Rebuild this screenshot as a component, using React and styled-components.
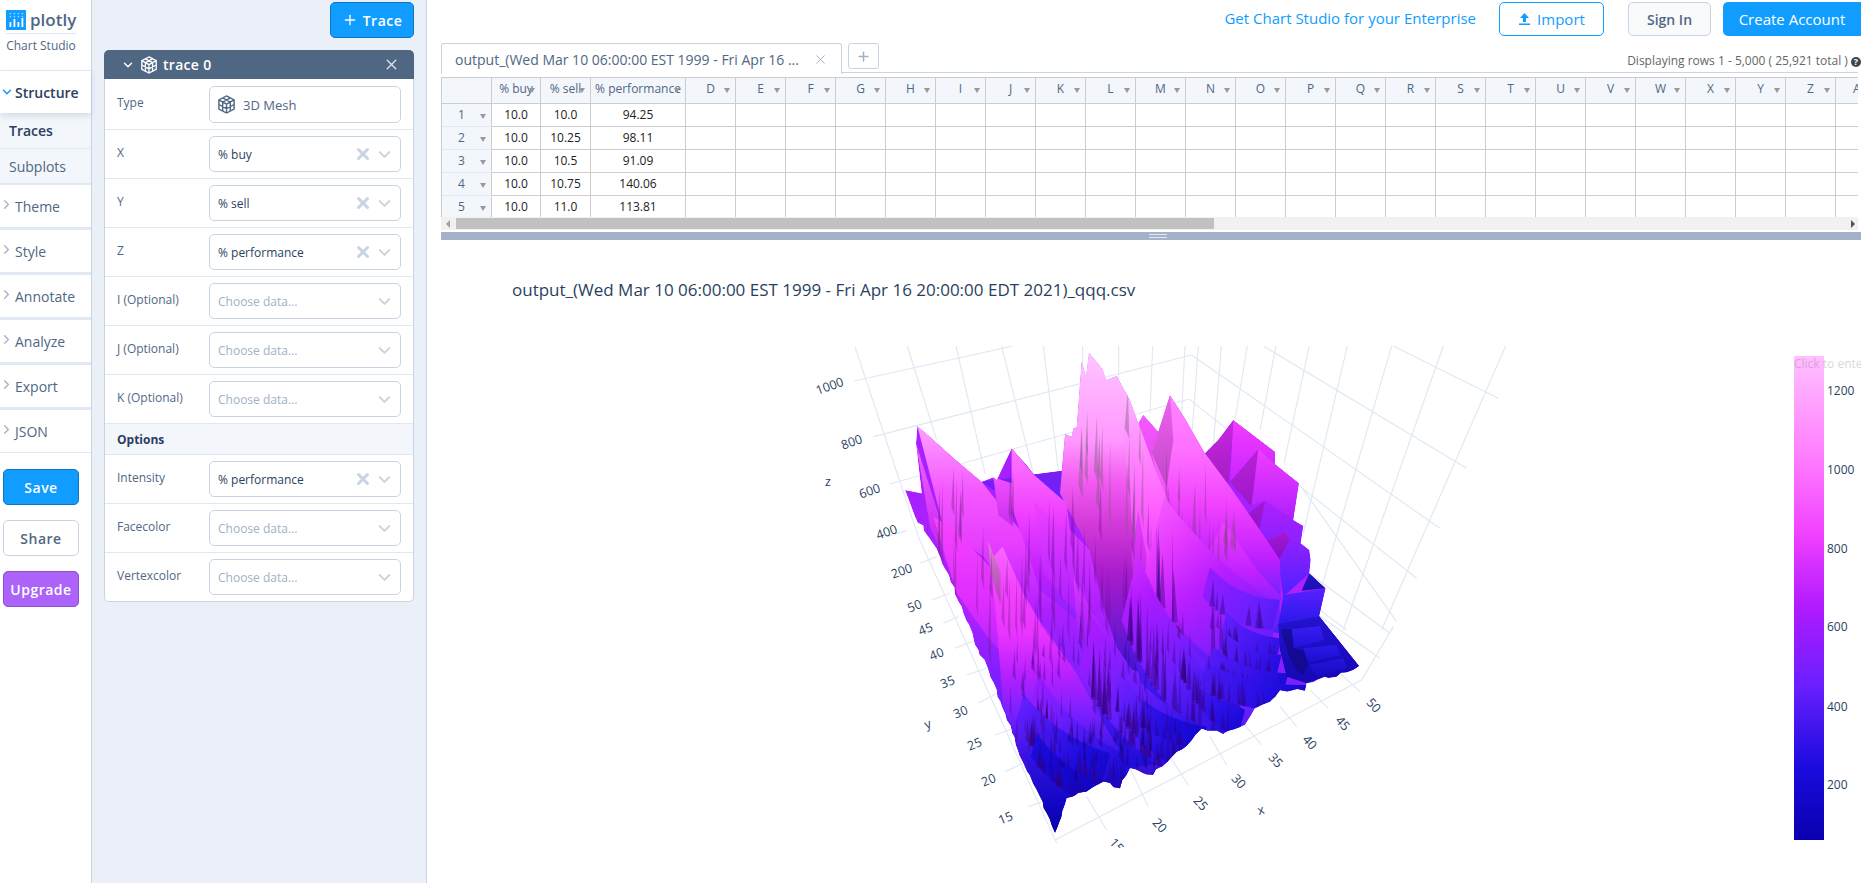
import React, { useMemo } from 'react';
import styled, { createGlobalStyle } from 'styled-components';
import { ChevronDown, ChevronRight, Plus, X } from 'lucide-react';

const SECTIONS = ['Theme', 'Style', 'Annotate', 'Analyze', 'Export', 'JSON'];
const LETTERS = 'DEFGHIJKLMNOPQRSTUVWXYZ'.split('').concat('AA');
const ROWS = [
  ['10.0', '10.0', '94.25'],
  ['10.0', '10.25', '98.11'],
  ['10.0', '10.5', '91.09'],
  ['10.0', '10.75', '140.06'],
  ['10.0', '11.0', '113.81'],
];

// colour scale of the trace, taken from the colour bar
const SCALE = [
  [0, [10, 0, 176]], [0.15, [26, 11, 221]], [0.32, [106, 31, 255]], [0.48, [176, 26, 255]],
  [0.63, [240, 64, 255]], [0.8, [255, 128, 255]], [1, [255, 192, 255]],
];

function ramp(t) {
  const v = Math.max(0, Math.min(1, t));
  let i = 0;
  while (i < SCALE.length - 2 && v > SCALE[i + 1][0]) i++;
  const [a, ca] = SCALE[i];
  const [b, cb] = SCALE[i + 1];
  const f = (v - a) / (b - a);
  return `rgb(${ca.map((n, j) => Math.round(n + (cb[j] - n) * f)).join(',')})`;
}

function makeRandom(start) {
  let seed = start;
  return () => {
    seed = (Math.imul(seed, 1664525) + 1013904223) >>> 0;
    return seed / 4294967296;
  };
}

const OUTLINE_TOP = '45,450 95,460 78,310 82,258 120,290 195,358 275,425 310,412 320,420 365,325 410,375 432,403 515,392 525,282 545,290 550,265 560,262 575,62 588,110 597,38 638,88 648,120 680,108 720,180 745,250 760,225 805,275 840,165 885,235 945,340 985,300 1030,240 1155,335 1155,372 1227,430 1210,540 1240,558 1232,610 1258,630 1262,660 1258,700 1307,745 1288,828 1408,978';
const OUTLINE_LOW = [[1408, 978], [1390, 990], [1340, 1010], [1285, 1018], [1250, 1030], [1245, 1052], [1170, 1050], [1140, 1085], [1095, 1105], [1065, 1155], [1000, 1182], [935, 1165], [905, 1200], [860, 1235], [830, 1268], [790, 1305], [720, 1285], [690, 1345], [640, 1325], [590, 1355], [530, 1375], [515, 1430], [495, 1480], [470, 1420], [440, 1350], [400, 1270], [350, 1140], [320, 1050], [265, 930], [215, 800], [150, 650], [115, 590], [75, 530]];

// the lower edges are stepped in the plot, so break them into short teeth
function jagged() {
  const rnd = makeRandom(91);
  const pts = [];
  OUTLINE_LOW.forEach(([x, y], i) => {
    if (i === 0) return;
    const [px, py] = OUTLINE_LOW[i - 1];
    const steps = Math.max(1, Math.round(Math.hypot(x - px, y - py) / 20));
    for (let s = 1; s <= steps; s++) {
      const f = s / steps;
      const jx = s === steps ? 0 : (rnd() - 0.5) * 10;
      const jy = s === steps ? 0 : (rnd() - 0.5) * 10;
      pts.push(`${px + (x - px) * f + jx},${py + (y - py) * f + jy}`);
    }
  });
  return `${OUTLINE_TOP} ${pts.join(' ')}`;
}

const SILHOUETTE = jagged();

// facets of the surface, back to front, in a 3x space with origin at (890,340)
const FACETS = [
  { p: SILHOUETTE, s: [[450, '#a820ff'], [800, '#b020ff'], [1100, '#6a1fff'], [1480, '#0a00a8']] },
  { p: '275,425 515,392 530,500 430,470 310,450', s: [[392, '#7a1ff0'], [480, '#6a1fff']] },
  { p: '945,340 1030,240 1015,430 1000,420', s: [[240, '#c828e0'], [430, '#a51cc4']] },
  { p: '1030,240 1155,335 1155,372 1105,330 1020,430', s: [[240, '#f43cff'], [430, '#c824ff']] },
  { p: '1105,328 1020,425 1080,495 1125,480 1210,540', s: [[328, '#b822d8'], [495, '#9c18c8']] },
  { p: '1105,328 1155,372 1227,430 1210,540 1125,482 1085,495', s: [[328, '#f23cff'], [540, '#ae20ff']] },
  { p: '1125,482 1075,520 1105,590 1120,610 1185,570 1210,540', s: [[482, '#a018d8'], [610, '#8a14c8']] },
  { p: '1125,482 1210,540 1240,558 1232,610 1185,572 1120,612 1105,590', s: [[482, '#b020ff'], [610, '#8a20ff']] },
  { p: '1185,572 1120,612 1165,665 1200,600', s: [[572, '#a818d8'], [665, '#8010c4']] },
  { p: '1185,572 1232,610 1258,630 1262,660 1258,700 1180,770 1165,665 1200,600', s: [[572, '#9a20ff'], [770, '#4e20ff']] },
  { p: '1258,700 1307,745 1235,752', s: [[700, '#2414c8'], [752, '#1c10b0']] },
  { p: '745,250 760,225 805,275 860,400 900,600 760,600 720,400', s: [[225, '#f858ff'], [600, '#d030e0']] },
  { p: '840,165 885,235 945,340 1020,440 1110,570 1170,660 1172,780 1030,810 900,650 820,480 785,340', s: [[165, '#ff84ff'], [330, '#ff70ff'], [500, '#f040ff'], [650, '#c020ff'], [810, '#5a20ff']] },
  { p: '840,165 812,250 785,340 830,440 850,300', s: [[165, '#f060f0'], [440, '#c048c8']] },
  { p: '1000,545 1040,600 1100,690 1170,765 1170,880 1040,860 960,810 955,640', s: [[545, '#f040ff'], [700, '#c020ff'], [880, '#4a20ff']] },
  { p: '510,460 525,282 545,290 550,265 560,262 575,62 597,38 638,88 680,108 720,180 745,250 800,400 860,540 940,700 960,780 880,900 760,1000 700,980 640,800 600,630 530,500', s: [[40, '#ffc4ff'], [300, '#ff98ff'], [430, '#f258f2'], [550, '#d43ad8'], [700, '#a81ccc'], [850, '#7a18d0'], [1000, '#3a14d8']] },
  { p: '720,180 745,250 800,400 860,540 940,700 960,790 880,920 770,960 730,640 720,440 700,300', s: [[180, '#ffb0ff'], [500, '#ff60ff'], [700, '#e838ff'], [850, '#a020ff'], [960, '#6020ff']] },
  { p: '745,510 725,640 735,860 760,800 770,650', s: [[510, '#f040ff'], [860, '#a01cd8']] },
  { p: '82,258 120,290 195,358 275,425 390,570 440,660 530,800 400,810 280,650 160,560', s: [[258, '#ffa0ff'], [450, '#f458ff'], [620, '#e63cff'], [810, '#b020ff']] },
  { p: '78,310 160,570 300,830 250,850 120,560', s: [[310, '#f468ff'], [560, '#d030f4'], [850, '#b020ff']] },
  { p: '310,412 325,525 370,560 365,430', s: [[412, '#f050ff'], [560, '#c82cf0']] },
  { p: '365,325 430,403 530,490 540,570 600,630 615,830 560,840 450,750 400,600 365,500', s: [[325, '#ff78ff'], [520, '#f040ff'], [700, '#c020ff'], [840, '#8a20ff']] },
  { p: '432,485 520,570 600,640 640,810 560,820 460,700', s: [[485, '#f040ff'], [820, '#a81eff']] },
  { p: '130,530 190,565 300,680 400,800 470,870 560,1000 400,1010 300,900 200,760', s: [[530, '#f844ff'], [800, '#dc2cff'], [1010, '#9c20ff']] },
  { p: '550,710 615,830 700,950 790,1090 830,1268 720,1285 640,1150 590,1000 560,850', s: [[710, '#e038ff'], [880, '#a420ff'], [1050, '#5a1cff'], [1270, '#1e0cd8']] },
  { p: '760,700 900,850 1000,1000 1050,1100 1000,1182 860,1235 830,1268 770,1100 720,900', s: [[700, '#d828ff'], [850, '#9420ff'], [1000, '#4a18f0'], [1220, '#1a0cd8']] },
  { p: '295,605 310,650 338,620 400,760 470,880 560,1000 640,1150 720,1285 690,1345 640,1325 590,1355 530,1375 515,1430 495,1480 440,1350 340,1100 320,850', s: [[620, '#f868ff'], [750, '#f440ff'], [880, '#ea34ff'], [1000, '#b820ff'], [1120, '#7a20ff'], [1250, '#3412e4'], [1400, '#1006c0'], [1480, '#0a00a8']] },
  { p: '295,605 302,700 332,795 332,700', s: [[605, '#d880d0'], [795, '#b040b8']] },
];

// these sit in front of the swept ridges
const FRONT_FACETS = [
  { p: '1180,765 1307,745 1288,828 1165,855', s: [[745, '#5a20ff'], [855, '#2818e8']] },
  { p: '1165,852 1288,828 1408,978 1390,990 1340,1010 1285,1018 1250,1030 1190,1010 1170,930', s: [[828, '#2412d0'], [1030, '#1408b4']] },
  { p: '1205,868 1290,858 1302,900 1210,925', s: [[858, '#3a1cf4'], [925, '#2012d8']] },
  { p: '1240,925 1340,915 1352,945 1255,968', s: [[915, '#2c18e8'], [968, '#1a0ecc']] },
  { p: '1258,975 1360,955 1372,985 1280,1010', s: [[955, '#2414dc'], [1010, '#160cc0']] },
  { p: '1172,868 1205,868 1212,925 1240,930 1255,968 1240,1005 1218,990 1195,945', s: [[870, '#180c9c'], [1005, '#120890']] },
];

// swept ridges of the lower half: [ax, ay, bx, by, sag, depth, t at a, t at b, needles]
const RIBBONS = [
  [822, 470, 1170, 800, 22, 260, 0.7, 0.3, 8],
  [745, 640, 1000, 1010, 35, 200, 0.56, 0.22, 20],
  [960, 680, 1170, 780, 25, 90, 0.42, 0.28, 6],
  [610, 830, 940, 1160, 40, 170, 0.48, 0.15, 24],
  [445, 1000, 720, 1250, 30, 110, 0.44, 0.12, 22],
  [690, 985, 900, 1190, 25, 100, 0.36, 0.12, 20],
  [885, 890, 1065, 1110, 25, 90, 0.36, 0.13, 18],
  [1010, 815, 1175, 895, 20, 60, 0.31, 0.2, 8],
  [1000, 870, 1175, 945, 20, 60, 0.3, 0.17, 10],
  [970, 920, 1195, 1000, 22, 60, 0.28, 0.15, 12],
  [950, 965, 1250, 1035, 24, 80, 0.26, 0.12, 16],
  [400, 1060, 660, 1240, 25, 100, 0.32, 0.1, 22],
  [760, 1080, 950, 1160, 14, 70, 0.22, 0.1, 14],
  [440, 1180, 610, 1320, 15, 70, 0.16, 0.06, 14],
];

// loose shaded needles on the faces: where their tips may lie, and how they look
const BACK_BANDS = [
  { x: [548, 760], y: [110, 400], h: [130, 280], w: [4, 10], c: 'rgba(125,95,125,0.42)', n: 16 },
  { x: [590, 900], y: [420, 760], h: [120, 320], w: [4, 9], c: 'rgba(110,10,150,0.32)', n: 30 },
  { x: [790, 1010], y: [300, 560], h: [100, 220], w: [4, 9], c: 'rgba(120,60,130,0.38)', n: 14 },
  { x: [100, 420], y: [330, 760], h: [120, 280], w: [3, 8], c: 'rgba(110,30,130,0.36)', n: 24 },
  { x: [370, 610], y: [430, 860], h: [110, 240], w: [4, 9], c: 'rgba(100,10,150,0.36)', n: 24 },
  { x: [1000, 1070], y: [505, 560], h: [50, 90], w: [4, 8], c: 'rgba(130,70,130,0.4)', n: 6 },
];

const FRONT_BANDS = [
  { x: [360, 560], y: [850, 1150], h: [40, 110], w: [3, 8], c: 'rgba(70,0,140,0.36)', n: 30 },
  { x: [560, 1010], y: [800, 1130], h: [50, 130], w: [3, 9], c: 'rgba(60,0,130,0.36)', n: 60 },
  { x: [470, 860], y: [1110, 1290], h: [40, 90], w: [4, 9], c: 'rgba(30,0,110,0.38)', n: 50 },
];

function makeRibbons() {
  const rnd = makeRandom(4711);
  return RIBBONS.map(([ax, ay, bx, by, sag, depth, ta, tb, count]) => {
    const top = (u) => {
      const bend = 4 * u * (1 - u) * sag;
      return [ax + (bx - ax) * u - 0.6 * bend, ay + (by - ay) * u + 0.8 * bend];
    };
    const low = (u) => {
      const [x, y] = top(u);
      return [x - depth * 0.25, y + depth];
    };
    const us = Array.from({ length: 15 }, (_, i) => i / 14);
    const p = us.map(top).concat(us.slice().reverse().map(low)).map((q) => q.join(',')).join(' ');
    const needles = Array.from({ length: count }, () => {
      const [x, y] = low(0.1 + rnd() * 0.9);
      const h = depth * (0.6 + rnd() * 0.5);
      const w = 3 + rnd() * 7;
      return `${x + (rnd() - 0.5) * 8},${y - h} ${x - w},${y} ${x + w},${y}`;
    });
    const stops = [0, 0.25, 0.5, 0.75, 1].map((f) => [f, ramp(ta + (tb - ta) * f)]);
    return { p, needles, stops, line: [ax, ay, bx, by + depth * 0.4] };
  });
}

function makeNeedles(bands, start) {
  const rnd = makeRandom(start);
  const span = ([a, b]) => a + rnd() * (b - a);
  return bands.flatMap((band) => Array.from({ length: band.n }, () => {
    const x = span(band.x);
    const y = span(band.y);
    const h = span(band.h);
    const w = span(band.w);
    return { p: `${x},${y} ${x - w},${y + h * 0.8} ${x + w * 0.4},${y + h}`, c: band.c };
  }));
}

const RIGHT_GRID = [
  [610, 48, 1220, 415], [395, 75, 1140, 595], [388, 208, 1070, 745], [720, 465, 1010, 875], [1000, 48, 1315, 205], [780, 840, 860, 900],
  [1337, 48, 965, 900], [1150, 48, 850, 900], [995, 48, 785, 770], [862, 48, 730, 610], [748, 48, 672, 400], [648, 48, 600, 300],
  [562, 48, 525, 270], [484, 48, 460, 350], [415, 48, 397, 300], [375, 48, 365, 250], [278, 48, 270, 250], [176, 48, 176, 150], [68, 48, 68, 100],
];

const LEFT_GRID = [
  [-105, 21, 85, 590], [85, 590, 500, 1510], [52, 18, 140, 300], [198, 18, 285, 400], [335, 18, 430, 400], [460, 18, 505, 390],
  [-108, 123, 370, 18], [-50, 290, 905, 45], [0, 432, 895, 178], [-10, 590, 50, 572],
  [495, 1500, 1415, 1020], [1415, 1020, 1510, 860], [650, 1470, 590, 1370], [775, 1400, 720, 1285], [895, 1335, 840, 1250],
  [1010, 1275, 960, 1190], [1115, 1215, 1060, 1150], [1220, 1160, 1170, 1100], [1315, 1105, 1260, 1050], [1410, 1055, 1350, 1000],
  [415, 1400, 470, 1380], [345, 1295, 400, 1270], [315, 1185, 370, 1165], [265, 1090, 320, 1060], [230, 1005, 290, 985],
  [195, 925, 245, 905], [160, 850, 205, 830], [125, 780, 180, 760], [90, 670, 140, 650], [1290, 828, 1470, 955], [1258, 700, 1500, 880],
];

const Z_TICKS = [['1000', 830, 387], ['800', 852, 443], ['600', 870, 492], ['400', 887, 533], ['200', 902, 572]];
const Y_TICKS = [['50', 915, 607], ['45', 926, 630], ['40', 937, 655], ['35', 948, 683], ['30', 961, 713], ['25', 975, 745], ['20', 989, 781], ['15', 1006, 819]];
const X_TICKS = [['15', 1116, 846], ['20', 1159, 826], ['25', 1200, 804], ['30', 1238, 782], ['35', 1275, 761], ['40', 1309, 743], ['45', 1342, 724], ['50', 1373, 706]];
const BAR_TICKS = [['1200', 392], ['1000', 471], ['800', 550], ['600', 628], ['400', 708], ['200', 786]];

function FacetGradient({ id, s }) {
  const a = s[0][0];
  const b = s[s.length - 1][0];
  return (
    <linearGradient id={id} gradientUnits="userSpaceOnUse" x1="0" x2="0" y1={a} y2={b}>
      {s.map(([y, c]) => <stop key={y} offset={(y - a) / (b - a)} stopColor={c} />)}
    </linearGradient>
  );
}

function Surface() {
  const ribbons = useMemo(makeRibbons, []);
  const backNeedles = useMemo(() => makeNeedles(BACK_BANDS, 277), []);
  const frontNeedles = useMemo(() => makeNeedles(FRONT_BANDS, 1301), []);
  return (
    <PlotSvg viewBox="428 240 1433 643">
      <defs>
        <clipPath id="scene"><rect x="428" y="346" width="1340" height="502" /></clipPath>
        <clipPath id="outline"><polygon points={SILHOUETTE} /></clipPath>
        <linearGradient id="bar" x1="0" y1="1" x2="0" y2="0">
          {SCALE.map(([t, c]) => <stop key={t} offset={t} stopColor={`rgb(${c.join(',')})`} />)}
        </linearGradient>
        {FACETS.map((f, i) => <FacetGradient key={i} id={`f${i}`} s={f.s} />)}
        {FRONT_FACETS.map((f, i) => <FacetGradient key={i} id={`b${i}`} s={f.s} />)}
        {ribbons.map((r, i) => (
          <linearGradient key={i} id={`r${i}`} gradientUnits="userSpaceOnUse" x1={r.line[0]} y1={r.line[1]} x2={r.line[2]} y2={r.line[3]}>
            {r.stops.map(([f, c]) => <stop key={f} offset={f} stopColor={c} />)}
          </linearGradient>
        ))}
      </defs>

      <g clipPath="url(#scene)">
        <g transform="translate(1060 330) scale(0.3333)">
          {RIGHT_GRID.map(([a, b, c, d], i) => <GridLine key={i} x1={a} y1={b} x2={c} y2={d} />)}
        </g>
        <g transform="translate(890 340) scale(0.3333)">
          {LEFT_GRID.map(([a, b, c, d], i) => <GridLine key={i} x1={a} y1={b} x2={c} y2={d} />)}
          <g clipPath="url(#outline)">
            {FACETS.map((f, i) => <polygon key={i} points={f.p} fill={`url(#f${i})`} />)}
            {backNeedles.map((n, i) => <polygon key={i} points={n.p} fill={n.c} />)}
            {ribbons.map((r, i) => (
              <g key={i}>
                <polygon points={r.p} fill={`url(#r${i})`} />
                {r.needles.map((p, j) => <polygon key={j} points={p} fill="rgba(50,0,120,0.4)" />)}
              </g>
            ))}
            {frontNeedles.map((n, i) => <polygon key={i} points={n.p} fill={n.c} />)}
            {FRONT_FACETS.map((f, i) => <polygon key={i} points={f.p} fill={`url(#b${i})`} />)}
          </g>
        </g>
        {Z_TICKS.map(([t, x, y]) => <Tick key={t} x={x} y={y} transform={`rotate(-20 ${x} ${y})`}>{t}</Tick>)}
        {Y_TICKS.map(([t, x, y]) => <Tick key={t} x={x} y={y} transform={`rotate(-22 ${x} ${y})`}>{t}</Tick>)}
        {X_TICKS.map(([t, x, y]) => <Tick key={t} x={x} y={y} transform={`rotate(48 ${x} ${y})`}>{t}</Tick>)}
        <Tick x={828} y={483}>z</Tick>
        <Tick x={928} y={725} transform="rotate(-20 928 725)">y</Tick>
        <Tick x={1261} y={811} transform="rotate(-15 1261 811)">x</Tick>
      </g>

      <rect x="1794" y="356" width="30" height="484" fill="url(#bar)" />
      <BarTitle x="1794" y="368">Click to enter Colorscale title</BarTitle>
      {BAR_TICKS.map(([t, y]) => <BarTick key={t} x={1827} y={y}>{t}</BarTick>)}
    </PlotSvg>
  );
}

function MeshIcon({ size = 18, color = '#fff' }) {
  return (
    <svg width={size} height={size} viewBox="0 0 20 20" fill="none" stroke={color} strokeWidth="1.5">
      <path d="M10 1 18 5.2v9.6L10 19 2 14.8V5.2Z" />
      <path d="M2 5.2 10 9.6l8-4.4M10 9.6V19M6 3.1l8 4.4v9.4M14 3.1 6 7.5v9.4M2 10l8 4.4 8-4.4" />
    </svg>
  );
}

function Logo() {
  return (
    <LogoRow>
      <LogoMark width="20" height="20" viewBox="0 0 20 20">
        <rect width="20" height="20" fill="#119dff" />
        {[3.5, 7.5, 11.5, 15.5].map((x, i) => (
          <g key={x} fill="#fff">
            <rect x={x} y={[12, 9, 12, 8][i]} width="1.8" height={[5, 8, 5, 9][i]} />
            <circle cx={x + 0.9} cy="3.6" r="0.9" fill="#8fd0ff" />
            <circle cx={x + 0.9} cy="6.6" r="0.9" fill="#8fd0ff" />
          </g>
        ))}
      </LogoMark>
      <LogoText>plotly</LogoText>
    </LogoRow>
  );
}

function Field({ label, value, placeholder, clearable }) {
  return (
    <FieldRow>
      <FieldLabel>{label}</FieldLabel>
      <SelectBox>
        {value ? <SelectValue>{value}</SelectValue> : <SelectHint>{placeholder}</SelectHint>}
        {clearable && <ClearMark size={18} strokeWidth={4} />}
        <OpenMark size={19} strokeWidth={2.6} />
      </SelectBox>
    </FieldRow>
  );
}

const CHOOSE = 'Choose data...';

export default function App() {
  return (
    <Page>
      <GlobalStyle />
      <Nav>
        <LogoBlock>
          <Logo />
          <StudioName>Chart Studio</StudioName>
        </LogoBlock>
        <OpenSection><ChevronDown size={14} color="#119dff" strokeWidth={2.6} /><span>Structure</span></OpenSection>
        <SubItem $active>Traces</SubItem>
        <SubItem>Subplots</SubItem>
        {SECTIONS.map((name) => (
          <Section key={name}><ChevronRight size={15} color="#a2b1c6" strokeWidth={2} /><span>{name}</span></Section>
        ))}
        <NavButtons>
          <NavButton $bg="#119dff" $line="#0d76bf" $fg="#fff">Save</NavButton>
          <NavButton $bg="#fff" $line="#c8d4e3" $fg="#506784">Share</NavButton>
          <NavButton $bg="#ab63fa" $line="#8c4fd6" $fg="#fff">Upgrade</NavButton>
        </NavButtons>
      </Nav>

      <Panel>
        <TraceButton><Plus size={16} strokeWidth={2} />Trace</TraceButton>
        <Fold>
          <FoldHead>
            <ChevronDown size={14} strokeWidth={2.4} />
            <MeshIcon />
            <FoldTitle>trace 0</FoldTitle>
            <FoldClose size={17} strokeWidth={1.8} />
          </FoldHead>
          <TypeRow>
            <FieldLabel>Type</FieldLabel>
            <TypeBox><MeshIcon size={19} color="#506784" /><TypeName>3D Mesh</TypeName></TypeBox>
          </TypeRow>
          <Field label="X" value="% buy" clearable />
          <Field label="Y" value="% sell" clearable />
          <Field label="Z" value="% performance" clearable />
          <Field label="I (Optional)" placeholder={CHOOSE} />
          <Field label="J (Optional)" placeholder={CHOOSE} />
          <Field label="K (Optional)" placeholder={CHOOSE} />
          <FoldSection>Options</FoldSection>
          <Field label="Intensity" value="% performance" clearable />
          <Field label="Facecolor" placeholder={CHOOSE} />
          <Field label="Vertexcolor" placeholder={CHOOSE} />
        </Fold>
      </Panel>

      <Main>
        <TopBar>
          <EnterpriseLink>Get Chart Studio for your Enterprise</EnterpriseLink>
          <ImportButton>
            <svg width="13" height="14" viewBox="0 0 13 14" fill="#119dff"><path d="M6.5 1 11 6H8v4H5V6H2ZM1 11.5h11V13H1Z" /></svg>
            Import
          </ImportButton>
          <SignIn>Sign In</SignIn>
          <CreateAccount>Create Account</CreateAccount>
        </TopBar>
        <TabRow>
          <Tab>
            <TabName>output_(Wed Mar 10 06:00:00 EST 1999 - Fri Apr 16 ...</TabName>
            <X size={15} color="#a2b1c6" strokeWidth={1.6} />
          </Tab>
          <AddTab><Plus size={15} strokeWidth={2.4} /></AddTab>
          <RowsInfo>Displaying rows 1 - 5,000 ( 25,921 total ) <HelpMark>?</HelpMark></RowsInfo>
        </TabRow>
        <Sheet>
          <SheetRow $head>
            <RowHead $w={50} $head />
            <HeadCell $w={49}>% buy<Caret /></HeadCell>
            <HeadCell $w={50}>% sell<Caret /></HeadCell>
            <HeadCell $w={95}>% performance<Caret /></HeadCell>
            {LETTERS.map((l) => <HeadCell key={l} $w={50}>{l}<Caret /></HeadCell>)}
          </SheetRow>
          {ROWS.map((row, i) => (
            <SheetRow key={i}>
              <RowHead $w={50}>{i + 1}<Caret /></RowHead>
              <Cell $w={49}>{row[0]}</Cell>
              <Cell $w={50}>{row[1]}</Cell>
              <Cell $w={95}>{row[2]}</Cell>
              {LETTERS.map((l) => <Cell key={l} $w={50} />)}
            </SheetRow>
          ))}
        </Sheet>
        <ScrollBar>
          <ScrollArrow $dir="left" />
          <ScrollThumb />
          <ScrollArrow $dir="right" />
        </ScrollBar>
        <Splitter><Grip /></Splitter>
        <PlotArea>
          <PlotTitle>output_(Wed Mar 10 06:00:00 EST 1999 - Fri Apr 16 20:00:00 EDT 2021)_qqq.csv</PlotTitle>
          <Surface />
        </PlotArea>
      </Main>
    </Page>
  );
}

const GlobalStyle = createGlobalStyle`
  html, body { margin: 0; padding: 0; height: 100%; background: #fff; overflow: hidden; }
  body { font-family: "Open Sans", "Liberation Sans", sans-serif; }
  * { box-sizing: border-box; }
`;

const Page = styled.div`
  display: flex;
  width: 1861px;
  height: 883px;
  overflow: hidden;
`;

const Nav = styled.div`
  width: 92px;
  flex: none;
  border-right: 1px solid #c8d4e3;
  background: #fff;
  display: flex;
  flex-direction: column;
`;

const LogoBlock = styled.div`
  height: 70px;
  padding: 10px 15px 0 6px;
`;

const LogoRow = styled.div`
  display: flex;
  align-items: flex-start;
  gap: 4px;
  height: 24px;
  border-bottom: 1px solid #dfe8f3;
`;

const LogoMark = styled.svg`
  flex: none;
`;

const LogoText = styled.span`
  font-size: 17px;
  line-height: 19px;
  font-weight: 600;
  color: #506784;
`;

const StudioName = styled.div`
  margin-top: 3px;
  font-size: 12px;
  color: #506784;
  text-align: center;
  white-space: nowrap;
`;

const OpenSection = styled.div`
  height: 43px;
  display: flex;
  align-items: center;
  gap: 1px;
  font-size: 14px;
  font-weight: 600;
  color: #2a3f5f;
  border-top: 1px solid #dfe8f3;
  box-shadow: 0 3px 6px rgba(80, 103, 132, 0.18);
  position: relative;
  svg { flex: none; }
`;

const SubItem = styled.div`
  height: 36px;
  padding-left: 9px;
  display: flex;
  align-items: center;
  font-size: 14px;
  background: #f3f6fa;
  color: ${(p) => (p.$active ? '#2a3f5f' : '#506784')};
  font-weight: ${(p) => (p.$active ? 600 : 400)};
  border-bottom: ${(p) => (p.$active ? '1px' : '2px')} solid #dfe8f3;
`;

const Section = styled.div`
  height: 45px;
  display: flex;
  align-items: center;
  gap: 1px;
  font-size: 14px;
  color: #506784;
  border-bottom: 3px solid #dfe8f3;
  &:nth-last-child(2) { border-bottom-width: 1px; height: 43px; }
  svg { flex: none; margin: -3px 0 0 -1px; }
`;

const NavButtons = styled.div`
  padding: 16px 12px 0 3px;
  display: flex;
  flex-direction: column;
  gap: 15px;
`;

const NavButton = styled.button`
  height: 36px;
  width: 76px;
  padding: 0;
  border-radius: 5px;
  border: 1px solid ${(p) => p.$line};
  background: ${(p) => p.$bg};
  color: ${(p) => p.$fg};
  font: 600 14px "Open Sans", sans-serif;
  letter-spacing: 0.5px;
`;

const Panel = styled.div`
  width: 335px;
  flex: none;
  background: #ebf0f8;
  border-right: 1px solid #c8d4e3;
  padding: 2px 12px 0 12px;
  display: flex;
  flex-direction: column;
  align-items: flex-end;
`;

const TraceButton = styled.button`
  width: 84px;
  height: 36px;
  border-radius: 5px;
  border: 1px solid #0d76bf;
  background: #119dff;
  color: #fff;
  font: 600 14px "Open Sans", sans-serif;
  letter-spacing: 0.5px;
  display: flex;
  align-items: center;
  justify-content: center;
  gap: 5px;
`;

const Fold = styled.div`
  margin-top: 12px;
  width: 310px;
  background: #fff;
  border: 1px solid #c8d4e3;
  border-top: none;
  border-radius: 5px;
`;

const FoldHead = styled.div`
  height: 29px;
  margin: 0 -1px;
  padding: 0 14px 0 17px;
  background: #506784;
  border-radius: 5px 5px 0 0;
  color: #fff;
  display: flex;
  align-items: center;
  gap: 5px;
`;

const FoldTitle = styled.span`
  flex: 1;
  font-size: 14px;
  font-weight: 600;
  letter-spacing: 0.3px;
`;

const FoldClose = styled(X)`
  color: #dfe8f3;
`;

const FieldRow = styled.div`
  height: 49px;
  padding: 6px 12px 0;
  display: flex;
  border-bottom: 1px solid #dfe8f3;
  &:last-child { border-bottom: none; height: 48px; }
`;

const TypeRow = styled(FieldRow)`
  height: 51px;
  padding-top: 7px;
`;

const FieldLabel = styled.div`
  width: 92px;
  flex: none;
  font-size: 12px;
  line-height: 16px;
  padding-top: 9px;
  color: #506784;
  white-space: nowrap;
`;

const SelectBox = styled.div`
  flex: 1;
  height: 36px;
  padding: 0 6px 0 8px;
  display: flex;
  align-items: center;
  border: 1px solid #c8d4e3;
  border-radius: 5px;
  background: #fff;
`;

const TypeBox = styled(SelectBox)`
  height: 37px;
  padding-left: 7px;
  gap: 7px;
`;

const TypeName = styled.span`
  font-size: 13px;
  color: #506784;
`;

const SelectValue = styled.span`
  flex: 1;
  font-size: 12px;
  color: #2a3f5f;
`;

const SelectHint = styled.span`
  flex: 1;
  font-size: 12px;
  color: #a2b1c6;
`;

const ClearMark = styled(X)`
  color: #c8d4e3;
  margin-right: 3px;
`;

const OpenMark = styled(ChevronDown)`
  color: #c8d4e3;
`;

const FoldSection = styled.div`
  height: 31px;
  padding: 1px 0 0 12px;
  display: flex;
  align-items: center;
  background: #f3f6fa;
  border-bottom: 1px solid #dfe8f3;
  font-size: 12px;
  font-weight: 700;
  color: #2a3f5f;
`;

const Main = styled.div`
  flex: 1;
  min-width: 0;
  margin-left: 1px;
  display: flex;
  flex-direction: column;
`;

const TopBar = styled.div`
  height: 42px;
  padding-top: 2px;
  display: flex;
  align-items: flex-start;
  justify-content: flex-end;
`;

const EnterpriseLink = styled.span`
  line-height: 33px;
  font-size: 15px;
  color: #119dff;
  margin-right: 23px;
`;

const TopButton = styled.button`
  height: 34px;
  border-radius: 5px;
  font: 15px "Open Sans", sans-serif;
  padding: 0;
`;

const ImportButton = styled(TopButton)`
  width: 105px;
  margin-right: 24px;
  background: #fff;
  border: 1px solid #119dff;
  color: #119dff;
  display: flex;
  align-items: center;
  justify-content: center;
  gap: 6px;
`;

const SignIn = styled(TopButton)`
  width: 83px;
  margin-right: 12px;
  background: #f8fafc;
  border: 1px solid #c8d4e3;
  color: #506784;
  font-size: 14px;
  font-weight: 600;
`;

const CreateAccount = styled(TopButton)`
  width: 138px;
  border: none;
  border-radius: 5px 0 0 5px;
  background: #119dff;
  color: #fff;
`;

const TabRow = styled.div`
  height: 31px;
  padding-left: 13px;
  display: flex;
  align-items: flex-start;
  position: relative;
  &::after {
    content: '';
    position: absolute;
    left: 414px;
    right: 3px;
    bottom: 0;
    border-bottom: 1px solid #c8d4e3;
  }
`;

const Tab = styled.div`
  width: 401px;
  height: 31px;
  margin-top: 1px;
  padding: 0 13px 0 13px;
  background: #fff;
  border: 1px solid #c8d4e3;
  border-bottom: none;
  border-radius: 3px 3px 0 0;
  display: flex;
  align-items: center;
  justify-content: space-between;
  position: relative;
  z-index: 1;
`;

const TabName = styled.span`
  font-size: 14px;
  color: #506784;
  white-space: nowrap;
`;

const AddTab = styled.div`
  width: 31px;
  height: 26px;
  margin: 1px 0 0 6px;
  border: 1px solid #c8d4e3;
  border-radius: 3px;
  color: #a2b1c6;
  display: flex;
  align-items: center;
  justify-content: center;
`;

const RowsInfo = styled.div`
  margin-left: auto;
  padding-top: 11px;
  font-size: 12px;
  line-height: 16px;
  color: #666;
  white-space: nowrap;
`;

const HelpMark = styled.span`
  display: inline-block;
  width: 10px;
  height: 10px;
  border-radius: 50%;
  background: #444;
  color: #fff;
  font-size: 9px;
  line-height: 10px;
  font-weight: 700;
  text-align: center;
`;

const Sheet = styled.div`
  margin: 4px 3px 0 13px;
  height: 140px;
  overflow: hidden;
  border-top: 1px solid #ccc;
  border-left: 1px solid #ccc;
`;

const SheetRow = styled.div`
  display: flex;
  height: ${(p) => (p.$head ? 26 : 23)}px;
`;

const Cell = styled.div`
  width: ${(p) => p.$w}px;
  flex: none;
  border-right: 1px solid #ccc;
  border-bottom: 1px solid #ccc;
  font-size: 12px;
  line-height: 22px;
  color: #222;
  text-align: center;
  position: relative;
`;

const HeadCell = styled(Cell)`
  background: #f3f6fa;
  color: #506784;
`;

const RowHead = styled(HeadCell)`
  padding-right: 10px;
  border-bottom-color: ${(p) => (p.$head ? '#ccc' : '#dfe8f3')};
`;

const Caret = styled.i`
  position: absolute;
  right: 5px;
  top: 10px;
  border-left: 3px solid transparent;
  border-right: 3px solid transparent;
  border-top: 5px solid #999;
`;

const ScrollBar = styled.div`
  margin: 0 3px 0 13px;
  height: 13px;
  background: #f1f1f1;
  display: flex;
  align-items: center;
  position: relative;
`;

const ScrollThumb = styled.div`
  width: 758px;
  height: 11px;
  margin-left: 6px;
  background: #c1c1c1;
`;

const ScrollArrow = styled.i`
  position: ${(p) => (p.$dir === 'right' ? 'absolute' : 'static')};
  right: 3px;
  margin-left: ${(p) => (p.$dir === 'left' ? '5px' : 0)};
  border-top: 4px solid transparent;
  border-bottom: 4px solid transparent;
  ${(p) => (p.$dir === 'left' ? 'border-right: 4px solid #a0a0a0;' : 'border-left: 4px solid #505050;')}
`;

const Splitter = styled.div`
  height: 8px;
  margin-top: 2px;
  margin-left: 13px;
  padding-left: 14px;
  background: #a3b1c9;
  display: flex;
  align-items: center;
  justify-content: center;
`;

const Grip = styled.div`
  width: 18px;
  height: 4px;
  border-top: 1px solid #dfe8f3;
  border-bottom: 1px solid #dfe8f3;
`;

const PlotArea = styled.div`
  flex: 1;
  min-height: 0;
  position: relative;
`;

const PlotTitle = styled.div`
  position: absolute;
  left: 84px;
  top: 38px;
  font-size: 17px;
  line-height: 24px;
  color: #2a3f5f;
  white-space: nowrap;
`;

const PlotSvg = styled.svg`
  display: block;
  width: 1433px;
  height: 643px;
`;

const GridLine = styled.line`
  stroke: #dfe8f3;
  stroke-width: 3.4;
`;

const Tick = styled.text`
  font-size: 12.5px;
  fill: #2a3f5f;
  text-anchor: middle;
  dominant-baseline: middle;
`;

const BarTick = styled.text`
  font-size: 12px;
  fill: #2a3f5f;
  dominant-baseline: middle;
`;

const BarTitle = styled.text`
  font-size: 12px;
  fill: #2a3f5f;
  opacity: 0.2;
`;
